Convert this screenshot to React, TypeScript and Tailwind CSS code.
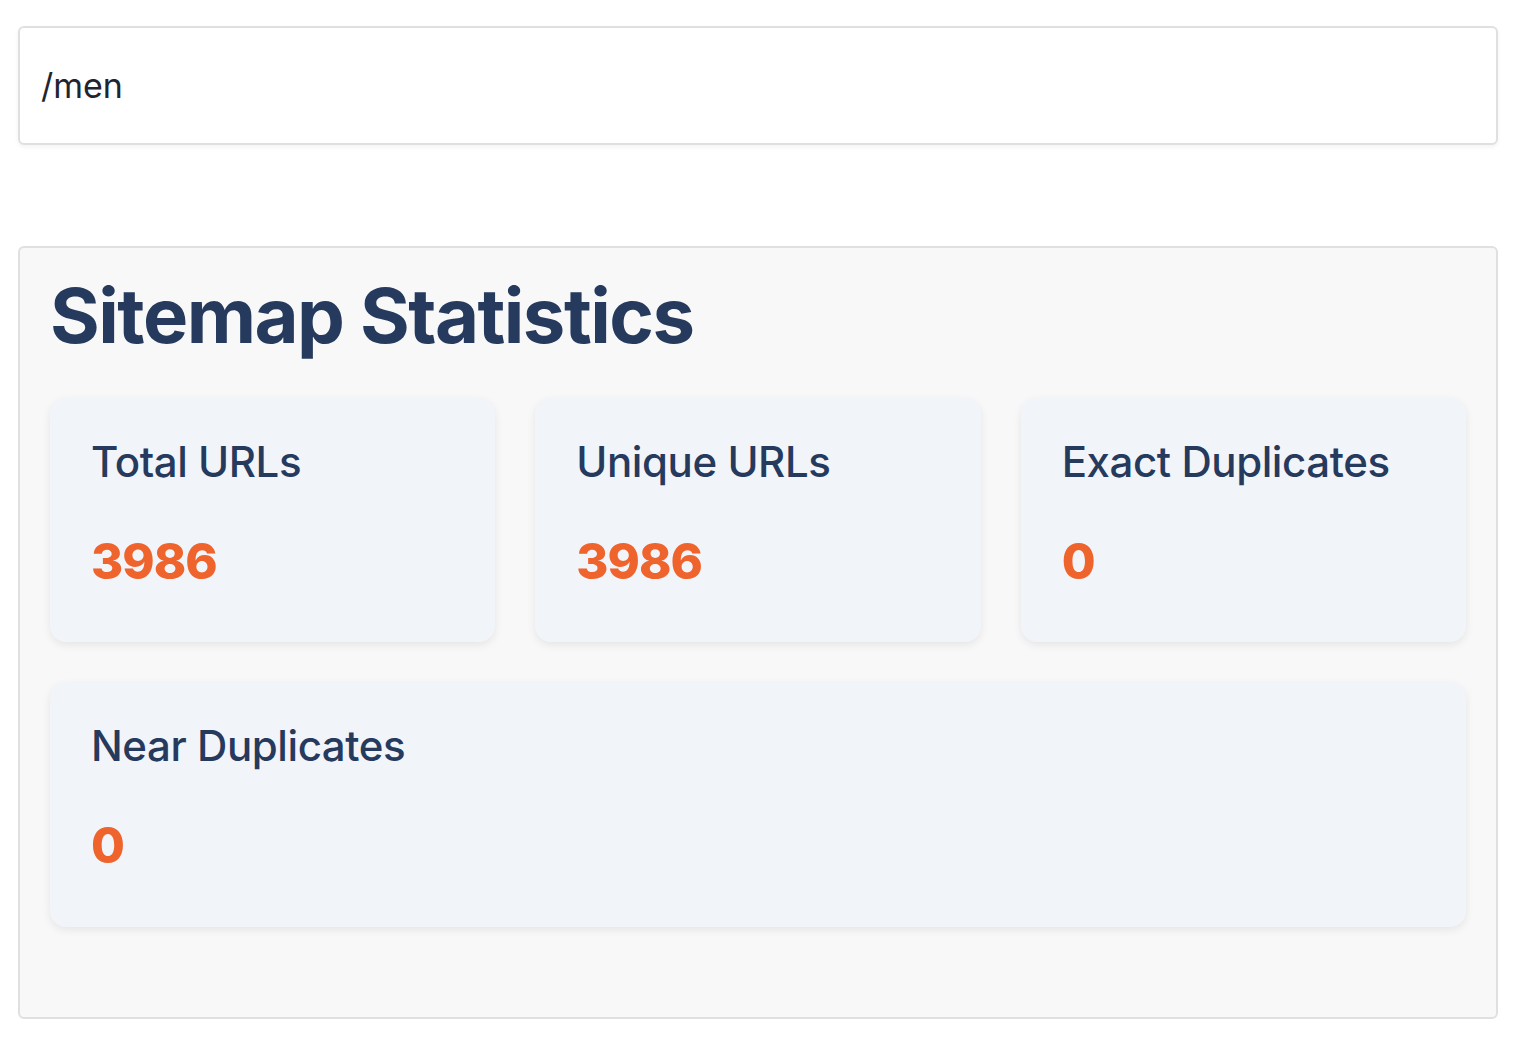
import React from "react"

const stats = [
  { label: "Total URLs", value: 3986 },
  { label: "Unique URLs", value: 3986 },
  { label: "Exact Duplicates", value: 0 },
]

function StatCard({ label, value, wide }: { label: string; value: number; wide?: boolean }) {
  return (
    <div
      className={
        "rounded-[16px] bg-[#f1f4f9] pl-[41px] pr-6 pt-[39px] pb-[51px] shadow-[0_3px_8px_rgba(0,0,0,0.08)] " +
        (wide ? "col-span-3" : "")
      }
    >
      <div className="text-[42px] font-medium leading-[1.2] tracking-[-0.01em] text-[#253a5d]">{label}</div>
      <div className="mt-[45px] text-[49px] font-extrabold leading-[1.2] tracking-[-0.02em] text-[#ef642d]">
        {value}
      </div>
    </div>
  )
}

export default function App() {
  return (
    <div className="min-h-[1043px] bg-white pl-[18px] pr-[22px] pt-[26px] font-['Inter','Liberation_Sans',sans-serif]">
      {/* Path input */}
      <div className="flex h-[119px] items-center rounded-[6px] border-2 border-[#e0e0e0] bg-white pl-[21px] shadow-[0_2px_4px_rgba(0,0,0,0.05)]">
        <input
          defaultValue="/men"
          className="w-full bg-transparent text-[34px] text-[#1e2530] outline-none"
        />
      </div>

      {/* Stats panel */}
      <div className="mt-[101px] rounded-[6px] border-2 border-[#e0e0e0] bg-[#f8f8f8] px-[30px] pt-[22px] pb-[90px]">
        <h2 className="mb-[37px] text-[76px] font-bold leading-[1.2] tracking-[-0.02em] text-[#253a5d]">
          Sitemap Statistics
        </h2>
        <div className="grid grid-cols-3 gap-10">
          {stats.map((s) => (
            <StatCard key={s.label} label={s.label} value={s.value} />
          ))}
          <StatCard label="Near Duplicates" value={0} wide />
        </div>
      </div>
    </div>
  )
}
